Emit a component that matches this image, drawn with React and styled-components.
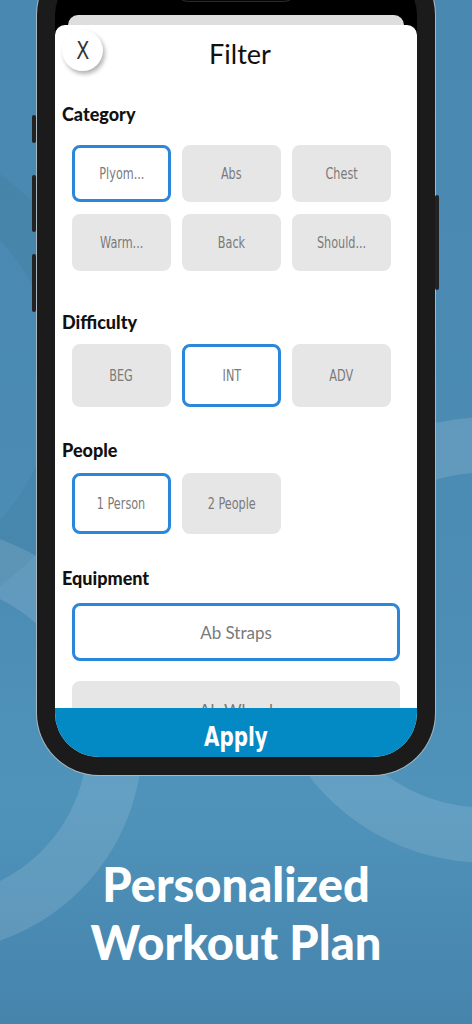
import React from 'react'
import styled, { createGlobalStyle } from 'styled-components'

const GlobalStyle = createGlobalStyle`
  * { box-sizing: border-box; }
  html, body { margin: 0; padding: 0; }
  body { font-family: Lato, "Noto Sans", sans-serif; }
`

const condensed = `"Liberation Sans Narrow", "DejaVu Sans Condensed", "Liberation Sans", sans-serif`

const Page = styled.div`
  position: relative;
  width: 472px;
  height: 1024px;
  overflow: hidden;
  background: linear-gradient(180deg, #4988b0 0%, #4c8db5 60%, #4f93bb 78%, #4684ac 100%);
  display: flex;
  flex-direction: column;
  align-items: center;
`

const Decor = styled.svg`
  position: absolute;
  left: 0;
  top: 0;
  width: 472px;
  height: 1024px;
`

const Phone = styled.div`
  position: relative;
  margin-top: -47px;
  width: 398px;
  height: 822px;
  padding: 18px;
  border-radius: 62px;
  background: #1b1b1b;
  box-shadow: 0 0 0 1px #a9b7c0;
  flex-shrink: 0;
`

const SideButton = styled.div`
  position: absolute;
  top: ${p => p.top}px;
  height: ${p => p.h}px;
  width: 4px;
  border-radius: 2px;
  background: #222;
  ${p => (p.right ? 'right: -4px;' : 'left: -5px;')}
`

const Screen = styled.div`
  position: relative;
  height: 100%;
  border-radius: 44px;
  background: #000;
  overflow: hidden;
  display: flex;
  flex-direction: column;
`

const Notch = styled.div`
  position: absolute;
  top: 0;
  left: 50%;
  transform: translateX(-50%);
  width: 126px;
  height: 30px;
  border-radius: 0 0 16px 16px;
  background: #050505;
  box-shadow: 0 1px 0 #2a2a2a;
`

const StatusSpace = styled.div`
  height: 44px;
  flex-shrink: 0;
`

const BackCard = styled.div`
  height: 10px;
  margin: 0 13px;
  border-radius: 10px 10px 0 0;
  background: #dedede;
  flex-shrink: 0;
`

const Sheet = styled.div`
  flex: 1;
  min-height: 0;
  background: #fff;
  border-radius: 10px 10px 0 0;
  display: flex;
  flex-direction: column;
  overflow: hidden;
`

const Header = styled.div`
  position: relative;
  height: 55px;
  flex-shrink: 0;
  display: flex;
  align-items: center;
  justify-content: center;
`

const CloseButton = styled.div`
  position: absolute;
  left: 7px;
  top: 5px;
  width: 41px;
  height: 41px;
  border-radius: 50%;
  background: #fff;
  box-shadow: 2px 3px 4px rgba(0, 0, 0, 0.3);
  display: flex;
  align-items: center;
  justify-content: center;
  font-family: ${condensed};
  font-size: 25px;
  color: #333;
`

const Narrow = styled.span`
  display: inline-block;
  transform: scaleX(${p => p.k || 0.78});
  white-space: nowrap;
`

const Title = styled.div`
  font-family: Lato, sans-serif;
  font-size: 27px;
  color: #111;
  margin-left: 8px;
  margin-top: 2px;
`

const Body = styled.div`
  flex: 1;
  min-height: 0;
  overflow: hidden;
  padding: 0 0 0 7px;
`

const Section = styled.div`
  padding-top: ${p => p.top}px;
`

const Heading = styled.div`
  font-family: Lato, sans-serif;
  font-weight: 900;
  font-size: 18px;
  line-height: 22px;
  color: #111;
`

const Grid = styled.div`
  display: grid;
  grid-template-columns: repeat(3, 99px);
  column-gap: 11px;
  row-gap: 12px;
  margin: ${p => p.gap}px 0 0 10px;
`

const List = styled.div`
  display: flex;
  flex-direction: column;
  gap: 20px;
  margin: 14px 0 0 10px;
  width: 328px;
`

const Chip = styled.div`
  height: ${p => p.h}px;
  border-radius: 8px;
  background: ${p => (p.selected ? '#fff' : '#e6e6e6')};
  border: 3px solid ${p => (p.selected ? '#2b87da' : '#e6e6e6')};
  display: flex;
  align-items: center;
  justify-content: center;
  font-family: ${p => (p.wide ? 'Lato, sans-serif' : condensed)};
  font-size: ${p => (p.wide ? 17 : 16)}px;
  color: #7a7a7a;
`

const ApplyBar = styled.div`
  height: 49px;
  flex-shrink: 0;
  background: #0389c4;
  display: flex;
  align-items: center;
  justify-content: center;
  padding-top: 8px;
  font-family: ${condensed};
  font-weight: 700;
  font-size: 27px;
  color: #fff;
`

const Caption = styled.div`
  position: relative;
  margin-top: 80px;
  text-align: center;
  font-family: Lato, sans-serif;
  font-weight: 900;
  font-size: 47px;
  line-height: 58px;
  color: #fff;
`

const categories = [
  { label: 'Plyom...', selected: true },
  { label: 'Abs' },
  { label: 'Chest' },
  { label: 'Warm...' },
  { label: 'Back' },
  { label: 'Should...' },
]

const difficulties = [
  { label: 'BEG' },
  { label: 'INT', selected: true },
  { label: 'ADV' },
]

const people = [{ label: '1 Person', selected: true }, { label: '2 People' }]

const equipment = [{ label: 'Ab Straps', selected: true }, { label: 'Ab Wheel' }]

const App = () => {
  return (
    <Page>
      <GlobalStyle />
      <Decor viewBox="0 0 472 1024">
        <circle cx="-70" cy="740" r="185" fill="none" stroke="rgba(255,255,255,0.12)" strokeWidth="55" />
        <circle cx="485" cy="640" r="195" fill="none" stroke="rgba(255,255,255,0.12)" strokeWidth="55" />
        <circle cx="-150" cy="380" r="230" fill="none" stroke="rgba(0,0,0,0.035)" strokeWidth="50" />
      </Decor>

      <Phone>
        <SideButton top={162} h={28} />
        <SideButton top={222} h={57} />
        <SideButton top={301} h={58} />
        <SideButton right top={242} h={95} />
        <Screen>
          <Notch />
          <StatusSpace />
          <BackCard />
          <Sheet>
            <Header>
              <CloseButton><Narrow k={0.85}>X</Narrow></CloseButton>
              <Title>Filter</Title>
            </Header>
            <Body>
              <Section top={23}>
                <Heading>Category</Heading>
                <Grid gap={20}>
                  {categories.map(c => (
                    <Chip key={c.label} h={57} selected={c.selected}>
                      <Narrow>{c.label}</Narrow>
                    </Chip>
                  ))}
                </Grid>
              </Section>
              <Section top={40}>
                <Heading>Difficulty</Heading>
                <Grid gap={11}>
                  {difficulties.map(c => (
                    <Chip key={c.label} h={63} selected={c.selected}>
                      <Narrow>{c.label}</Narrow>
                    </Chip>
                  ))}
                </Grid>
              </Section>
              <Section top={32}>
                <Heading>People</Heading>
                <Grid gap={12}>
                  {people.map(c => (
                    <Chip key={c.label} h={61} selected={c.selected}>
                      <Narrow>{c.label}</Narrow>
                    </Chip>
                  ))}
                </Grid>
              </Section>
              <Section top={33}>
                <Heading>Equipment</Heading>
                <List>
                  {equipment.map(c => (
                    <Chip key={c.label} wide h={58} selected={c.selected}>{c.label}</Chip>
                  ))}
                </List>
              </Section>
            </Body>
            <ApplyBar><Narrow k={0.82}>Apply</Narrow></ApplyBar>
          </Sheet>
        </Screen>
      </Phone>

      <Caption>
        Personalized
        <br />
        Workout Plan
      </Caption>
    </Page>
  )
}

export default App
